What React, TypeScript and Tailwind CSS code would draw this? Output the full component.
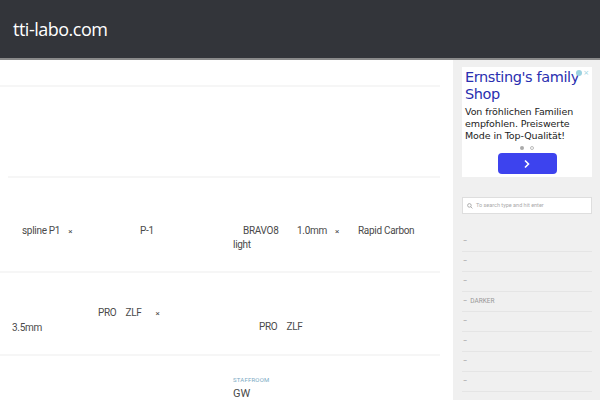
export default function App() {
    const sideItems = ["", "", "", "DARKER", "", "", "", "", ""]

    return (
    <div className="w-[600px] h-[400px] overflow-hidden bg-white font-['Roboto',sans-serif] text-[#4a4a4a]">
        {/* header */}
        <div className="h-[60px] bg-[#33353a] border-b-2 border-[#8a8a8a] flex items-center pl-[13px]">
            <span className="text-white text-[18px] font-medium font-['Open_Sans',sans-serif] tracking-[-0.5px]">tti-labo.com</span>
        </div>

        <div className="flex h-[340px]">
            {/* main column */}
            <div className="w-[453px] pr-[13px]">
                <div className="h-[27px] border-b-2 border-[#f6f6f6]"></div>
                <div className="h-[91px] ml-[8px] border-b-2 border-[#f6f6f6]"></div>

                <div className="h-[95px] border-b-2 border-[#f6f6f6] flex items-start text-[10px] leading-[14px] pt-[46px] tracking-[-0.3px]">
                    <div className="w-[140px] pl-[22px]">spline P1 <span className="ml-[6px] text-[8px]">×</span></div>
                    <div className="w-[93px]">P-1</div>
                    <div className="w-[64px] indent-[10px]">BRAVO8 light</div>
                    <div className="w-[61px]">1.0mm <span className="ml-[6px] text-[8px]">×</span></div>
                    <div>Rapid Carbon</div>
                </div>

                <div className="h-[83px] border-b-2 border-[#f6f6f6] flex items-start text-[10px] leading-[14px] tracking-[-0.3px]">
                    <div className="w-[259px] pl-[12px] pt-[33px]">
                        <div className="pl-[86px]">PRO<span className="ml-[9px]">ZLF</span><span className="ml-[14px] text-[8px]">×</span></div>
                        <div>3.5mm</div>
                    </div>
                    <div className="pt-[47px]">PRO<span className="ml-[9px]">ZLF</span></div>
                </div>

                <div className="pl-[233px] pt-[19px]">
                    <div className="text-[6px] text-[#7aaac4] tracking-[0.2px]">STAFFROOM</div>
                    <div className="text-[11px] leading-[14px] mt-[3px]">GW</div>
                </div>
            </div>

            {/* sidebar */}
            <div className="w-[147px] bg-[#f0f0f0] pl-[9px] pr-[8px] pt-[7px]">
                <div className="relative h-[110px] bg-white px-[3px] pt-[2px] font-['DejaVu_Sans',sans-serif]">
                    <div className="absolute right-[3px] top-[3px] flex gap-[1px]">
                        <span className="w-[6px] h-[6px] rounded-full bg-[#9ad2e0]"></span>
                        <span className="text-[7px] leading-[6px] text-[#9ad2e0]">×</span>
                    </div>
                    <div className="text-[#2a2fb0] text-[14.5px] leading-[17px] tracking-[-0.4px]">Ernsting's family Shop</div>
                    <div className="text-[#222] text-[9.5px] leading-[12px] mt-[3px] tracking-[-0.1px]">Von fröhlichen Familien empfohlen. Preiswerte Mode in Top-Qualität!</div>
                    <div className="flex justify-center gap-[6px] mt-[4px]">
                        <span className="w-[4px] h-[4px] rounded-full bg-[#aaa]"></span>
                        <span className="w-[4px] h-[4px] rounded-full border border-[#bbb]"></span>
                    </div>
                    <div className="flex justify-center mt-[3px]">
                        <div className="w-[59px] h-[21px] rounded-[4px] bg-[#3d43ee] flex items-center justify-center">
                            <svg width="8" height="10" viewBox="0 0 8 10" fill="none" stroke="white" strokeWidth="1.6"><path d="M2 1.5 L5.5 5 L2 8.5" /></svg>
                        </div>
                    </div>
                </div>

                <div className="mt-[20px] h-[17px] bg-white border border-[#dedede] flex items-center pl-[4px] gap-[3px]">
                    <svg width="6" height="6" viewBox="0 0 10 10" fill="none" stroke="#999" strokeWidth="1.3"><circle cx="4" cy="4" r="3" /><path d="M6.2 6.2 L9 9" /></svg>
                    <span className="text-[5.5px] text-[#aaa]">To search type and hit enter</span>
                </div>

                <div className="mt-[18px]">
                    {sideItems.map((item, i) => (
                        <div key={i} className="h-[20px] border-b border-[#e5e5e5] flex items-center text-[6.5px] text-[#999] pl-[1px]">
                            <span>–</span>
                            {item && <span className="ml-[3px]">{item}</span>}
                        </div>
                    ))}
                </div>
            </div>
        </div>
    </div>
    );
}
